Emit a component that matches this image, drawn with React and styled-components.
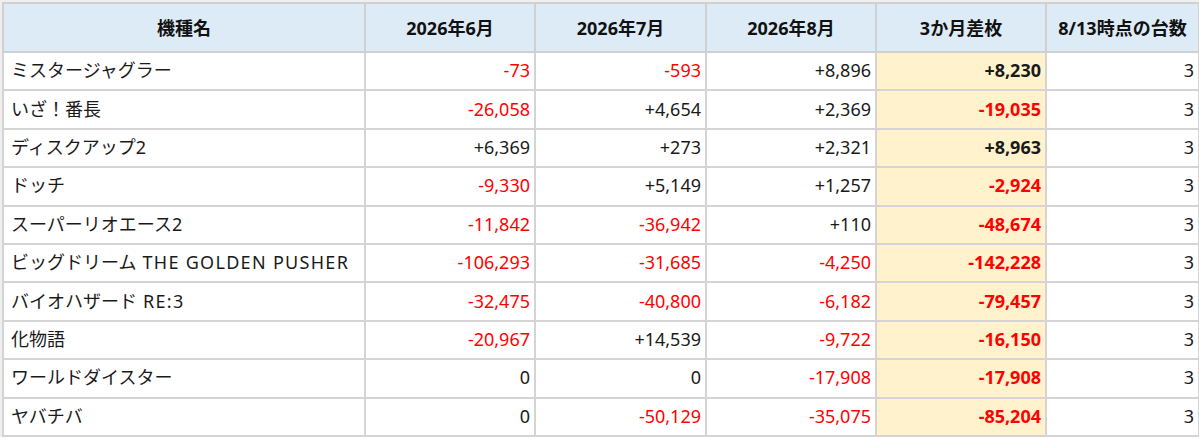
import React from 'react';
import styled, { createGlobalStyle } from 'styled-components';

const GlobalStyle = createGlobalStyle`
  html, body {
    margin: 0;
    padding: 0;
    background: #ffffff;
  }
  body {
    font-family: "Noto Sans", "Noto Sans CJK JP", sans-serif;
    color: #1a1a1a;
  }
`;

const Sheet = styled.div`
  padding: 2px 0 0 2px;
  background: linear-gradient(#efefef, #efefef) top / 100% 2px no-repeat,
    linear-gradient(#efefef, #efefef) left / 2px 100% no-repeat;
`;

const Table = styled.table`
  border-collapse: collapse;
  table-layout: fixed;
  width: 1196px;
  font-size: 18px;
  line-height: 1;
`;

const HeadCell = styled.th`
  background: #ddebf7;
  border: 2px solid #d0d0d0;
  height: 47px;
  padding: 0 4px;
  font-weight: 700;
  text-align: center;
  white-space: nowrap;
  color: #111;
`;

const Row = styled.tr`
  height: 38.4px;
`;

const NameCell = styled.td`
  border: 2px solid #d4d4d4;
  padding: 0 6px 2px 7px;
  text-align: left;
  white-space: nowrap;
  overflow: hidden;
`;

// latin runs in the names sit wider in the original
const Latin = styled.span`
  letter-spacing: 1.3px;
`;

const NumCell = styled.td`
  border: 2px solid #d4d4d4;
  padding: 0 4px 2px 0;
  text-align: right;
  white-space: nowrap;
  color: ${(p) => (p.$neg ? '#ff0000' : '#1a1a1a')};
  background: ${(p) => (p.$mark ? '#fff2cc' : 'transparent')};
  font-weight: ${(p) => (p.$mark ? 700 : 400)};
`;

const widths = [362, 170, 171, 170, 170, 153];
const heads = ['機種名', '2026年6月', '2026年7月', '2026年8月', '3か月差枚', '8/13時点の台数'];

const rows = [
  ['ミスタージャグラー', -73, -593, 8896],
  ['いざ！番長', -26058, 4654, 2369],
  ['ディスクアップ2', 6369, 273, 2321],
  ['ドッチ', -9330, 5149, 1257],
  ['スーパーリオエース2', -11842, -36942, 110],
  ['ビッグドリーム THE GOLDEN PUSHER', -106293, -31685, -4250],
  ['バイオハザード RE:3', -32475, -40800, -6182],
  ['化物語', -20967, 14539, -9722],
  ['ワールドダイスター', 0, 0, -17908],
  ['ヤバチバ', 0, -50129, -35075],
];

const fmt = (n) => {
  if (n === 0) return '0';
  const s = Math.abs(n).toLocaleString('en-US');
  return (n > 0 ? '+' : '-') + s;
};

const renderName = (name) =>
  name.split(/( [A-Z][A-Z :0-9]*)/).map((part, i) =>
    i % 2 ? <Latin key={i}>{part}</Latin> : part
  );

export default function App() {
  return (
    <>
      <GlobalStyle />
      <Sheet>
        <Table>
          <colgroup>
            {widths.map((w, i) => (
              <col key={i} style={{ width: w }} />
            ))}
          </colgroup>
          <thead>
            <tr>
              {heads.map((h) => (
                <HeadCell key={h}>{h}</HeadCell>
              ))}
            </tr>
          </thead>
          <tbody>
            {rows.map(([name, m6, m7, m8]) => {
              const total = m6 + m7 + m8;
              return (
                <Row key={name}>
                  <NameCell>{renderName(name)}</NameCell>
                  <NumCell $neg={m6 < 0}>{fmt(m6)}</NumCell>
                  <NumCell $neg={m7 < 0}>{fmt(m7)}</NumCell>
                  <NumCell $neg={m8 < 0}>{fmt(m8)}</NumCell>
                  <NumCell $neg={total < 0} $mark>{fmt(total)}</NumCell>
                  <NumCell>3</NumCell>
                </Row>
              );
            })}
          </tbody>
        </Table>
      </Sheet>
    </>
  );
}
